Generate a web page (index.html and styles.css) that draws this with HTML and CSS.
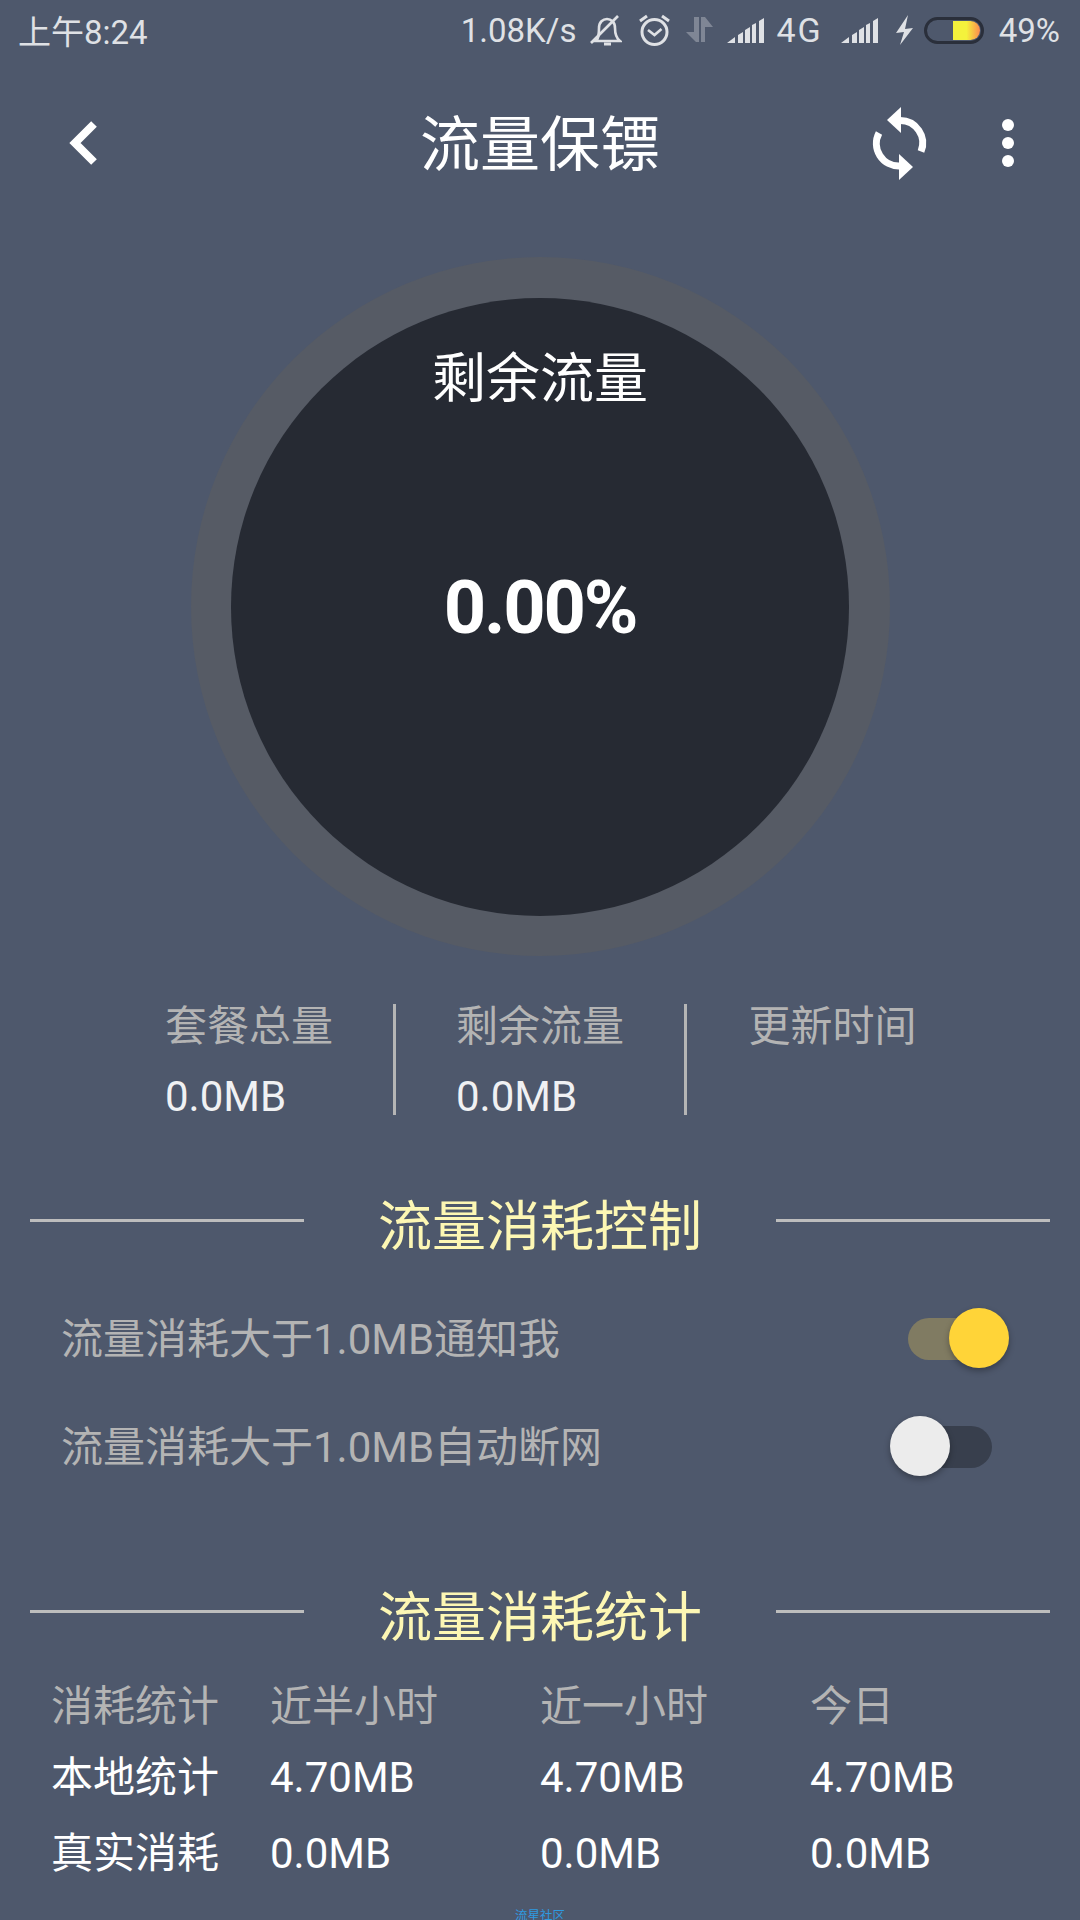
FILE: index.html
```html
<!DOCTYPE html>
<html lang="zh-CN">
<head>
	<meta charset="UTF-8">
	<meta name="viewport" content="width=device-width, initial-scale=1.0">
	<title>流量保镖</title>
	<link rel="stylesheet" href="styles.css">
</head>
<body>
	<div class="screen">
		<div class="status-bar">
			<div class="status-time">上午8:24</div>
			<div class="status-right">
				<span class="speed">1.08K/s</span>
				<svg class="ic-bell" width="32" height="32" viewBox="0 0 32 32" fill="none" stroke="#dfe1e5" stroke-width="2.600">
					<path d="M6 27c3-3 3-7 3-13 0-6 4-9 8-9s8 3 8 9c0 6 1 10 5 13z"/>
					<path d="M14 30h7" stroke-width="3"/>
					<path d="M1 29L28 2"/>
				</svg>
				<svg class="ic-alarm" width="32" height="32" viewBox="0 0 32 32" fill="none" stroke="#dfe1e5" stroke-width="3">
					<circle cx="15.500" cy="18" r="12.500"/>
					<path d="M9 16l6.500 5 7-6" stroke-width="2.600"/>
					<path d="M1 7l7-5M30 7l-7-5"/>
				</svg>
				<svg class="ic-data" width="27" height="26" viewBox="0 0 27 26" fill="#7f8695">
					<path d="M13 0v25h-3L0 15h8V0z"/>
					<path d="M15 25V0h4l8 10h-8v15z"/>
				</svg>
				<svg class="ic-signal" width="37" height="25" viewBox="0 0 37 25" fill="#dfe1e5">
					<path d="M0 25l8-6v6zM11 25v-8l5-3v11zM18 25V12l5-3v16zM25 25V7l4-2v20zM32 25V3l5-3v25z"/>
				</svg>
				<span class="net">4G</span>
				<svg class="ic-signal-2" width="37" height="25" viewBox="0 0 37 25" fill="#dfe1e5">
					<path d="M0 25l8-6v6zM11 25v-8l5-3v11zM18 25V12l5-3v16zM25 25V7l4-2v20zM32 25V3l5-3v25z"/>
				</svg>
				<svg class="ic-bolt" width="17" height="30" viewBox="0 0 17 30" fill="#dfe1e5">
					<path d="M12 0L0 18l8-1-4 13 13-17-8 1z"/>
				</svg>
				<div class="battery"><div class="battery-fill"></div></div>
				<span class="percent">49%</span>
			</div>
		</div>

		<div class="nav">
			<svg class="nav-back" width="30" height="46" viewBox="0 0 30 46" fill="none" stroke="#fff" stroke-width="8">
				<path d="M26 4L7 23l19 19"/>
			</svg>
			<h1>流量保镖</h1>
			<div class="nav-actions">
				<svg width="60" height="80" viewBox="0 0 60 80" fill="none" stroke="#fff" stroke-width="7">
					<path d="M30 17.500a22.500 22.500 0 0 1 21 31"/>
					<path d="M30 63A22.500 22.500 0 0 1 9 30"/>
					<path d="M31 4v26L17 17z" fill="#fff" stroke="none"/>
					<path d="M29 51v26l14-13z" fill="#fff" stroke="none"/>
				</svg>
				<div class="dots"><i></i><i></i><i></i></div>
			</div>
		</div>

		<div class="gauge">
			<div class="gauge-inner">
				<div class="gauge-label">剩余流量</div>
				<div class="gauge-value">0.00%</div>
			</div>
		</div>

		<div class="stats">
			<div class="stat">
				<div class="stat-label">套餐总量</div>
				<div class="stat-value">0.0MB</div>
			</div>
			<div class="stat">
				<div class="stat-label">剩余流量</div>
				<div class="stat-value">0.0MB</div>
			</div>
			<div class="stat">
				<div class="stat-label">更新时间</div>
				<div class="stat-value"></div>
			</div>
		</div>

		<div class="section-head control-head">
			<span class="rule"></span>
			<h2>流量消耗控制</h2>
			<span class="rule"></span>
		</div>

		<div class="option">
			<span class="option-text">流量消耗大于1.0MB通知我</span>
			<div class="toggle on"><span class="track"></span><span class="knob"></span></div>
		</div>
		<div class="option">
			<span class="option-text">流量消耗大于1.0MB自动断网</span>
			<div class="toggle"><span class="track"></span><span class="knob"></span></div>
		</div>

		<div class="section-head usage-head">
			<span class="rule"></span>
			<h2>流量消耗统计</h2>
			<span class="rule"></span>
		</div>

		<div class="usage">
			<div class="usage-row head">
				<span>消耗统计</span><span>近半小时</span><span>近一小时</span><span>今日</span>
			</div>
			<div class="usage-row local">
				<span>本地统计</span><span>4.70MB</span><span>4.70MB</span><span>4.70MB</span>
			</div>
			<div class="usage-row real">
				<span>真实消耗</span><span>0.0MB</span><span>0.0MB</span><span>0.0MB</span>
			</div>
		</div>

		<div class="watermark">流星社区</div>
	</div>
</body>
</html>
```

FILE: styles.css
```css
* {
	margin: 0;
	padding: 0;
	box-sizing: border-box;
}

html, body {
	width: 1080px;
	height: 1920px;
	overflow: hidden;
}

body {
	background-color: #4e586c;
	font-family: Roboto, "Noto Sans CJK SC", sans-serif;
	color: #fff;
}

.screen {
	width: 1080px;
	height: 1920px;
	overflow: hidden;
}

/* 状态栏 */
.status-bar {
	height: 60px;
	display: flex;
	align-items: center;
	justify-content: space-between;
	padding: 0 20px 0 18px;
	font-size: 33px;
	color: #dfe1e5;
}

.status-right {
	display: flex;
	align-items: center;
}

.ic-bell { margin-left: 14px; }
.ic-alarm { margin-left: 17px; }
.ic-data { margin-left: 15px; }
.ic-signal { margin-left: 14px; }
.net {
	margin-left: 12px;
	font-size: 34px;
	letter-spacing: 2px;
}
.ic-signal-2 { margin-left: 18px; }
.ic-bolt { margin-left: 18px; }

.battery {
	width: 60px;
	height: 27px;
	margin-left: 11px;
	padding: 1px;
	border: 3px solid #2a2f3b;
	border-radius: 14px;
	display: flex;
	justify-content: flex-end;
}

.battery-fill {
	width: 27px;
	border-radius: 0 10px 10px 0;
	background: linear-gradient(to right, #f4f23c 50%, #fd8a4f);
}

.percent { margin-left: 15px; }

/* 标题栏 */
.nav {
	height: 166px;
	display: grid;
	grid-template-columns: 1fr auto 1fr;
	align-items: center;
	padding: 0 66px 0 68px;
}

.nav h1 {
	margin: 0 2px 7px 0;
	font-size: 60px;
	font-weight: 400;
}

.nav-actions {
	display: flex;
	align-items: center;
	justify-content: flex-end;
	gap: 72px;
}

.dots {
	display: flex;
	flex-direction: column;
	gap: 6px;
}

.dots i {
	display: block;
	width: 12px;
	height: 12px;
	border-radius: 50%;
	background: #fff;
}

/* 圆环 */
.gauge {
	width: 699px;
	height: 699px;
	margin: 31px auto 0;
	padding: 40.500px;
	border-radius: 50%;
	background: #565b65;
}

.gauge-inner {
	height: 100%;
	border-radius: 50%;
	background: #262a33;
	text-align: center;
}

.gauge-label {
	padding-top: 46px;
	font-size: 54px;
	line-height: 72px;
}

.gauge-value {
	margin-top: 147px;
	font-size: 74px;
	font-weight: 700;
	letter-spacing: -2.200px;
	line-height: 90px;
}

/* 统计 */
.stats {
	display: flex;
	height: 111px;
	margin: 48px 102px 0 105px;
}

.stat {
	flex: 0 0 291px;
	display: flex;
	flex-direction: column;
	align-items: center;
	border-right: 3px solid #b5b5b5;
}

.stat:last-child {
	border-right: none;
}

.stat-label {
	width: 168px;
	font-size: 42px;
	line-height: 46px;
	color: #b4b4b4;
}

.stat-value {
	width: 168px;
	margin-top: 24px;
	font-size: 42px;
	line-height: 46px;
	color: #f0f1f3;
}

/* 分区标题 */
.section-head {
	display: flex;
	align-items: center;
	justify-content: space-between;
	height: 64px;
	padding: 0 30px;
}

.control-head { margin-top: 73px; }
.usage-head { margin-top: 79px; }

.section-head h2 {
	font-size: 54px;
	font-weight: 400;
	line-height: 64px;
	color: #fdf7b4;
	position: relative;
	top: 8px;
}

.rule {
	width: 274px;
	height: 3px;
	background: #bdbdbd;
}

/* 开关 */
.option {
	height: 108px;
	display: flex;
	align-items: center;
	justify-content: space-between;
	padding: 0 71px 0 61px;
	font-size: 42px;
	line-height: 46px;
	color: #b4b4b4;
}

.option-text {
	margin-top: 4px;
}

.control-head + .option { margin-top: 32px; }

.toggle {
	width: 119px;
	height: 60px;
	position: relative;
}

.track {
	position: absolute;
	left: 18px;
	top: 10px;
	width: 84px;
	height: 42px;
	border-radius: 21px;
	background: #383f4d;
}

.knob {
	position: absolute;
	left: 0;
	top: 0;
	width: 60px;
	height: 60px;
	border-radius: 50%;
	background: #ececec;
	box-shadow: 0 3px 6px rgba(0, 0, 0, 0.3);
}

.toggle.on .track { background: #807b62; }
.toggle.on .knob { left: 59px; background: #ffd438; }

/* 消耗统计表 */
.usage {
	margin-top: 29px;
	padding-left: 51px;
}

.usage-row {
	display: grid;
	grid-template-columns: 219px 270px 270px 1fr;
	align-items: center;
	font-size: 42px;
	line-height: 46px;
	color: #fff;
}

.usage-row.head {
	height: 70px;
	color: #b4b4b4;
}

.usage-row.local { height: 72px; }
.usage-row.real { height: 80px; }

.watermark {
	margin-top: 14px;
	text-align: center;
	font-size: 12.500px;
	line-height: 16px;
	color: #2f9ae0;
}
```
